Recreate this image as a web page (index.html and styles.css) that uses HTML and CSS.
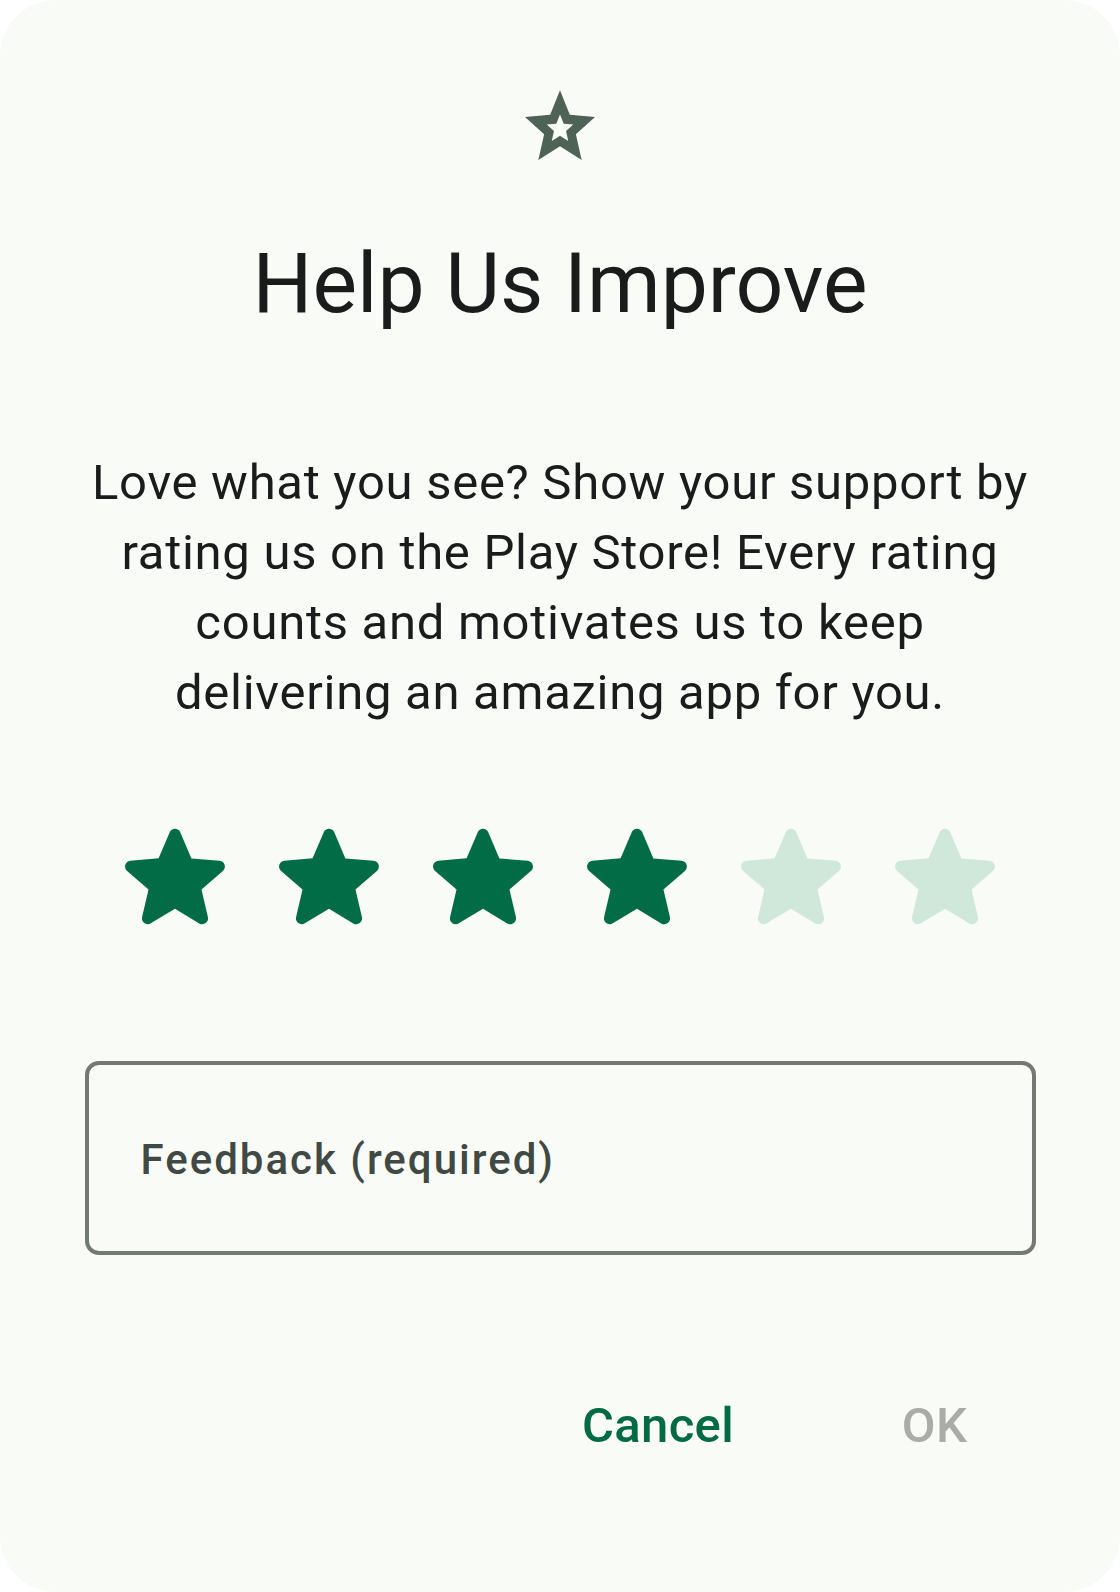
FILE: index.html
```html
<!DOCTYPE html>
<html lang="en">
<head>
<meta charset="utf-8">
<title>Help Us Improve</title>
<link rel="stylesheet" href="styles.css">
</head>
<body>
<div class="dialog">
  <svg class="top-icon" viewBox="0 0 24 24" preserveAspectRatio="none" aria-hidden="true">
    <path fill-rule="evenodd" d="M12 2 L14.81 8.63 L22 9.24 L16.54 13.97 L18.18 21 L12 17.27 L5.82 21 L7.46 13.97 L2 9.24 L9.19 8.63 Z M12 8.572 L13.068 11.091 L15.8 11.323 L13.725 13.121 L14.348 15.792 L12 14.375 L9.652 15.792 L10.275 13.121 L8.2 11.323 L10.932 11.091 Z"/>
  </svg>
  <h1 class="title">Help Us Improve</h1>
  <p class="body-text">Love what you see? Show your support by rating us on the Play Store! Every rating counts and motivates us to keep delivering an amazing app for you.</p>
  <div class="stars">
    <span class="star on"><svg viewBox="0 0 24 24"><path d="M12 17.27l4.15 2.51c.76.46 1.69-.22 1.49-1.08l-1.1-4.72 3.67-3.18c.67-.58.31-1.68-.57-1.75l-4.83-.41-1.89-4.46c-.34-.81-1.5-.81-1.84 0L9.19 8.63l-4.83.41c-.88.07-1.24 1.170-.57 1.75l3.67 3.18-1.1 4.72c-.2.86.73 1.54 1.49 1.08l4.15-2.5z"/></svg></span>
    <span class="star on"><svg viewBox="0 0 24 24"><path d="M12 17.27l4.15 2.51c.76.46 1.69-.22 1.49-1.08l-1.1-4.72 3.67-3.18c.67-.58.31-1.68-.57-1.75l-4.83-.41-1.89-4.46c-.34-.81-1.5-.81-1.84 0L9.19 8.63l-4.83.41c-.88.07-1.24 1.17-.57 1.75l3.67 3.18-1.1 4.72c-.2.86.73 1.54 1.49 1.08l4.15-2.5z"/></svg></span>
    <span class="star on"><svg viewBox="0 0 24 24"><path d="M12 17.27l4.15 2.51c.76.46 1.69-.22 1.49-1.08l-1.1-4.72 3.67-3.18c.67-.58.31-1.68-.57-1.75l-4.83-.41-1.89-4.46c-.34-.81-1.5-.81-1.84 0L9.19 8.63l-4.83.41c-.88.07-1.24 1.17-.57 1.75l3.67 3.18-1.1 4.72c-.2.86.73 1.54 1.49 1.08l4.15-2.5z"/></svg></span>
    <span class="star on"><svg viewBox="0 0 24 24"><path d="M12 17.27l4.15 2.51c.76.46 1.69-.22 1.49-1.08l-1.1-4.72 3.67-3.18c.67-.58.31-1.68-.57-1.75l-4.83-.41-1.89-4.46c-.34-.81-1.5-.81-1.84 0L9.19 8.63l-4.83.41c-.88.07-1.24 1.17-.57 1.75l3.67 3.18-1.1 4.72c-.2.86.73 1.54 1.49 1.08l4.15-2.5z"/></svg></span>
    <span class="star off"><svg viewBox="0 0 24 24"><path d="M12 17.27l4.15 2.51c.76.46 1.69-.22 1.49-1.08l-1.1-4.72 3.67-3.18c.67-.58.31-1.68-.57-1.75l-4.83-.41-1.89-4.46c-.34-.81-1.5-.81-1.84 0L9.19 8.63l-4.83.41c-.88.07-1.24 1.17-.57 1.75l3.67 3.18-1.1 4.72c-.2.86.73 1.54 1.49 1.08l4.15-2.5z"/></svg></span>
    <span class="star off"><svg viewBox="0 0 24 24"><path d="M12 17.27l4.15 2.51c.76.46 1.69-.22 1.49-1.08l-1.1-4.72 3.67-3.18c.67-.58.31-1.68-.57-1.75l-4.83-.41-1.89-4.46c-.34-.81-1.5-.81-1.84 0L9.19 8.63l-4.83.41c-.88.07-1.24 1.17-.57 1.75l3.67 3.18-1.1 4.72c-.2.86.73 1.54 1.49 1.08l4.15-2.5z"/></svg></span>
  </div>
  <div class="field">
    <span class="field-label">Feedback (required)</span>
  </div>
  <div class="actions">
    <button class="btn btn-cancel" type="button">Cancel</button>
    <button class="btn btn-ok" type="button" disabled>OK</button>
  </div>
</div>
</body>
</html>
```

FILE: styles.css
```css
* {
  box-sizing: border-box;
}

html, body {
  margin: 0;
  padding: 0;
  background: #ffffff;
}

body {
  font-family: Roboto, "Noto Sans", "Liberation Sans", sans-serif;
}

.dialog {
  width: 1120px;
  height: 1592px;
  border-radius: 56px;
  background: #f9fbf7;
  display: flex;
  flex-direction: column;
  align-items: center;
  padding: 84px 0 0;
  overflow: hidden;
}

.top-icon {
  width: 84px;
  height: 88px;
  margin-top: -1px;
  fill: #4e6355;
  flex: none;
}

.title {
  margin: 57px 0 0;
  font-size: 84px;
  line-height: 112px;
  font-weight: 400;
  color: #191c1a;
  text-align: center;
}

.body-text {
  margin: 108px 0 0;
  width: 952px;
  font-size: 49px;
  line-height: 70px;
  letter-spacing: 0.72px;
  font-weight: 400;
  color: #191c1a;
  text-align: center;
}

.stars {
  margin-top: 80px;
  display: flex;
}

.star {
  width: 154px;
  height: 140px;
  display: flex;
  justify-content: center;
}

.star svg {
  width: 140px;
  height: 140px;
}

.star.on svg {
  fill: #026c46;
}

.star.off svg {
  fill: #cfe8da;
}

.field {
  margin-top: 113px;
  width: 951px;
  height: 194px;
  border: 4px solid #737a72;
  border-radius: 14px;
  display: flex;
  align-items: center;
  padding: 0 0 0 52px;
}

.field-label {
  font-size: 42px;
  line-height: 56px;
  font-weight: 500;
  letter-spacing: 2px;
  color: #404943;
  margin-top: 4px;
}

.actions {
  margin-top: 136px;
  align-self: stretch;
  display: flex;
  justify-content: flex-end;
  gap: 57px;
  padding-right: 84px;
}

.btn {
  min-width: 203px;
  padding: 0 42px;
  border: none;
  background: none;
  font-family: Roboto, "Noto Sans", "Liberation Sans", sans-serif;
  font-size: 49px;
  line-height: 70px;
  font-weight: 500;
  letter-spacing: 0.35px;
  text-align: center;
}

.btn-cancel {
  color: #036b44;
}

.btn-ok {
  color: #a9aca7;
}
```
